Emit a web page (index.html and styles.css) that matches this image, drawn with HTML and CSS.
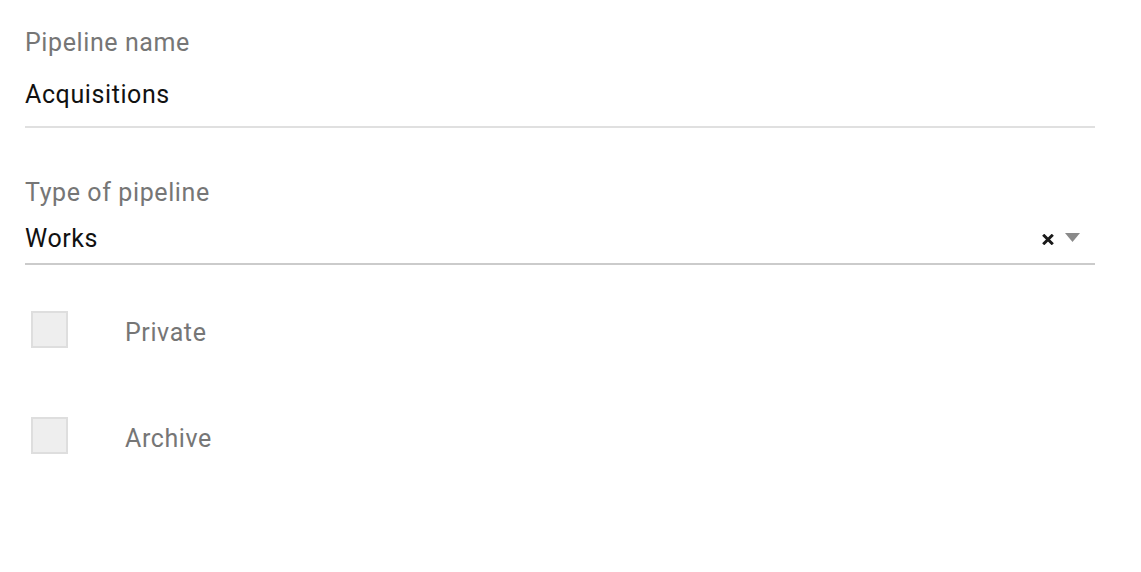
FILE: index.html
```html
<!DOCTYPE html>
<html>
<head>
<meta charset="utf-8">
<link rel="stylesheet" href="styles.css">
</head>
<body>
<div class="form">
  <div class="field text-field">
    <div class="label">Pipeline name</div>
    <div class="value">Acquisitions</div>
  </div>
  <div class="field select-field">
    <div class="label">Type of pipeline</div>
    <div class="select-row">
      <div class="value">Works</div>
      <div class="controls">
        <svg class="clear" width="12" height="11" viewBox="0 0 12 11"><path d="M1.2 0.8 L10.8 10.2 M10.8 0.8 L1.2 10.2" stroke="#1a1a1a" stroke-width="3" stroke-linecap="butt"/></svg>
        <svg class="arrow" width="15" height="9" viewBox="0 0 15 9"><path d="M0 0 H15 L7.5 9 Z" fill="#8a8a8a"/></svg>
      </div>
    </div>
  </div>
  <div class="check-row first">
    <span class="box"></span>
    <span class="check-label">Private</span>
  </div>
  <div class="check-row">
    <span class="box"></span>
    <span class="check-label">Archive</span>
  </div>
</div>
</body>
</html>
```
FILE: styles.css
```css
html, body {
  margin: 0;
  padding: 0;
  background: #fff;
}
body {
  font-family: Roboto, "Noto Sans", sans-serif;
  font-size: 25px;
  letter-spacing: 0.6px;
  line-height: 28px;
}
.form {
  width: 1070px;
  margin-left: 25px;
  padding-top: 29px;
}
.label {
  color: #767676;
}
.value {
  color: #111;
}
.text-field {
  border-bottom: 2px solid #e0e0e0;
}
.text-field .value {
  margin-top: 24px;
  padding-bottom: 17px;
}
.select-field {
  margin-top: 51px;
  border-bottom: 2px solid #cbcbcb;
}
.select-row {
  display: flex;
  align-items: flex-start;
  margin-top: 18px;
  padding-bottom: 10px;
}
.select-row .value {
  flex: 1;
}
.controls {
  display: flex;
  align-items: flex-start;
  gap: 11px;
  margin-right: 15px;
  padding-top: 8px;
}
.clear {
  margin-top: 1px;
}
.check-row {
  display: flex;
  align-items: flex-start;
  margin-top: 69px;
}
.check-row.first {
  margin-top: 46px;
}
.box {
  width: 33px;
  height: 33px;
  margin-left: 6px;
  border: 2px solid #dedede;
  background: #eeeeee;
  flex: none;
}
.check-label {
  margin-left: 57px;
  margin-top: 8px;
  color: #767676;
}
```
